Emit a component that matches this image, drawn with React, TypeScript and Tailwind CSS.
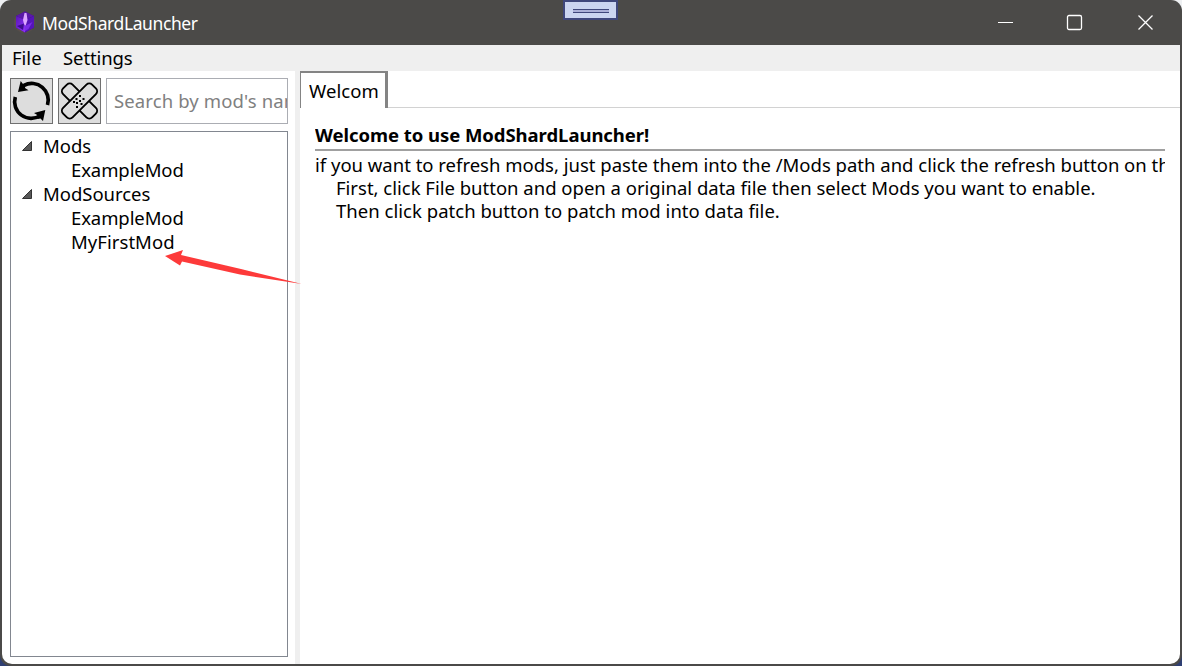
import React from "react";

function GemIcon() {
  return (
    <svg width="22" height="24" viewBox="0 0 22 24" className="shrink-0">
      <defs>
        <radialGradient id="glow">
          <stop offset="0.6" stopColor="#8a5a4e" stopOpacity="0.7" />
          <stop offset="1" stopColor="#8a5a4e" stopOpacity="0" />
        </radialGradient>
        <linearGradient id="left" x1="0" y1="0" x2="1" y2="1">
          <stop offset="0" stopColor="#5a16b8" />
          <stop offset="1" stopColor="#8f32fa" />
        </linearGradient>
      </defs>
      <circle cx="10.500" cy="11.500" r="11" fill="url(#glow)" />
      <path d="M11 .5 20 5v11.500L11 21.500l-9-5V5z" fill="#3b0a86" />
      <path d="M11 .5 20 5l-9 4-9-4z" fill="#5a1aa8" />
      <path d="M2 5l9 4v12.500l-9-5z" fill="url(#left)" />
      <path d="M11 9 20 5v11.500l-9 5z" fill="#5514b8" />
      <path d="M10.500 2h2l1 7-2 6-1.500-2-1-4z" fill="#dca6ff" />
      <path d="M11 15l7.500-4-4 7L11 20z" fill="#7a2be6" />
      <path d="M3 15l7-2.500L9 19z" fill="#3f0d90" />
    </svg>
  );
}

function RefreshIcon() {
  return (
    <svg width="41" height="44" viewBox="0 0 41 44" fill="none">
      <path d="M13 6.300A16.600 16.600 0 0 1 36.500 26" stroke="#000" strokeWidth="3.700" />
      <path d="M4.300 18A16.600 16.600 0 0 0 29.500 36.500" stroke="#000" strokeWidth="3.700" />
      <path d="M9.700 2 12 5l2.500-.5L14 9l3.500 2.200L7 13z" fill="#000" />
      <path d="M34.300 31 32 42l-2.500-2.500-3 .500.500-3.500-4-2.500z" fill="#000" />
    </svg>
  );
}

function BandageIcon() {
  return (
    <svg width="41" height="44" viewBox="0 0 41 44" fill="none" stroke="#000" strokeWidth="1.900">
      <rect x="-20.500" y="-6.700" width="41" height="13.400" rx="4" transform="translate(20.500 22) rotate(45)" />
      <rect x="-20.500" y="-6.700" width="41" height="13.400" rx="4" fill="#ddd" transform="translate(20.500 22) rotate(-45)" />
      <g fill="#000" stroke="none">
        <path d="M20 16h2v2h-2zM23.500 19h2v2h-2zM16.500 19h2v2h-2zM20 21h2v2h-2zM17 23h2v2h-2zM14 22h2v2h-2zM21.500 24h2v2h-2zM17 27h2v2h-2z" />
      </g>
    </svg>
  );
}

function Branch({ label, className, children }: { label: string; className: string; children: React.ReactNode }) {
  return (
    <li>
      <div className="flex h-6 items-center">
        <svg width="10" height="10" viewBox="0 0 10 10" className="ml-[11px] mr-[11px] shrink-0">
          <path d="M9.500 .5v9h-9z" fill="#595959" stroke="#333" />
        </svg>
        <span className={className}>{label}</span>
      </div>
      <ul className="pl-[60px]">{children}</ul>
    </li>
  );
}

export default function App() {
  return (
    <div className="h-[666px] w-[1182px] overflow-hidden bg-[linear-gradient(#eef0f2_50%,#2f3f73_50%)] font-['Noto_Sans',sans-serif] text-[18.5px] text-black">
      <div className="relative flex h-full flex-col overflow-hidden rounded-[11px] bg-[#4b4a48]">
        <header className="flex h-[45px] shrink-0 items-center pl-[14px] text-white">
          <GemIcon />
          <h1 className="ml-[6px] whitespace-nowrap text-[17.5px] leading-6 tracking-[-0.4px]">ModShardLauncher</h1>
          <div className="ml-auto mr-[28px] flex items-center">
            <svg width="17" height="17" viewBox="0 0 17 17" stroke="#fff" className="mr-[52px]"><path d="M1 8.500h15" /></svg>
            <svg width="17" height="17" viewBox="0 0 17 17" fill="none" stroke="#fff" strokeWidth="1.300" className="mr-[54px]"><rect x="1.500" y="1.500" width="14" height="14" rx="1.500" /></svg>
            <svg width="17" height="17" viewBox="0 0 17 17" stroke="#fff" strokeWidth="1.300"><path d="m1.500 1.500 14 14m0-14-14 14" /></svg>
          </div>
        </header>
        <div className="absolute left-[563px] top-0 flex h-5 w-[55px] items-center justify-center border-2 border-[#3f477c] bg-[#cbd5f1]">
          <div className="mt-[2px] h-1 w-9 border-y border-[#3f477c] bg-[#abb0d8]" />
        </div>
        <div className="mx-[2px] mb-[2px] flex min-h-0 flex-1 flex-col overflow-hidden rounded-b-[10px] bg-white">
          <nav className="flex h-[26px] shrink-0 items-center bg-[#efefef] pl-[10px]">
            <span className="w-[51px]">File</span>
            <span className="tracking-[-0.1px]">Settings</span>
          </nav>
          <div className="flex min-h-0 flex-1">
            <aside className="flex w-[293px] shrink-0 flex-col pb-[7px] pl-2 pr-[7px] pt-[7px]">
              <div className="flex h-[46px] shrink-0 gap-[5px]">
                <button className="w-[43px] shrink-0 border border-[#707070] bg-[#ddd]"><RefreshIcon /></button>
                <button className="w-[43px] shrink-0 border border-[#707070] bg-[#ddd]"><BandageIcon /></button>
                <div className="flex min-w-0 flex-1 items-center overflow-hidden whitespace-nowrap border border-[#abadb3] pl-[7px] text-[#808080]">
                  <span className="tracking-[0.12px]">Search by mod's name</span>
                </div>
              </div>
              <ul className="mt-[7px] flex-1 border border-[#828790] pt-[2px]">
                <Branch label="Mods" className="">
                  <li className="h-6 leading-6 tracking-[-0.1px]">ExampleMod</li>
                </Branch>
                <Branch label="ModSources" className="tracking-[-0.02px]">
                  <li className="h-6 leading-6 tracking-[-0.1px]">ExampleMod</li>
                  <li className="h-6 leading-6 tracking-[0.05px]">MyFirstMod</li>
                </Branch>
              </ul>
            </aside>
            <div className="w-[5px] shrink-0 bg-[#efefef]" />
            <main className="min-w-0 flex-1">
              <div className="flex h-[37px]">
                <div className="w-[88px] overflow-hidden border-l border-r-[3px] border-t-2 border-[#848484] pl-2 pr-[7px]">
                  <div className="overflow-hidden leading-[35px] tracking-[0.1px]">Welcom</div>
                </div>
                <div className="flex-1 border-b border-[#d2d2d2]" />
              </div>
              <section className="mx-[15px] overflow-hidden whitespace-nowrap">
                <h2 className="h-[43px] border-b-2 border-[#a0a0a0] pt-[14px] font-bold leading-[25px] tracking-[-0.05px]">Welcome to use ModShardLauncher!</h2>
                <p className="mt-[2px] leading-[23px]">if you want to refresh mods, just paste them into the /Mods path and click the refresh button on the left.</p>
                <p className="pl-[21px] leading-[23px]">First, click File button and open a original data file then select Mods you want to enable.</p>
                <p className="pl-[21px] leading-[23px] tracking-[0.03px]">Then click patch button to patch mod into data file.</p>
              </section>
            </main>
          </div>
        </div>
        <svg width="138" height="36" viewBox="0 0 138 36" className="pointer-events-none absolute left-[164px] top-[249px]">
          <path d="M1 7 19 1l-2 5 60 14 61 15L76 25.500 18 12.500l-2 4z" fill="#fd3a3a" />
        </svg>
      </div>
    </div>
  );
}
